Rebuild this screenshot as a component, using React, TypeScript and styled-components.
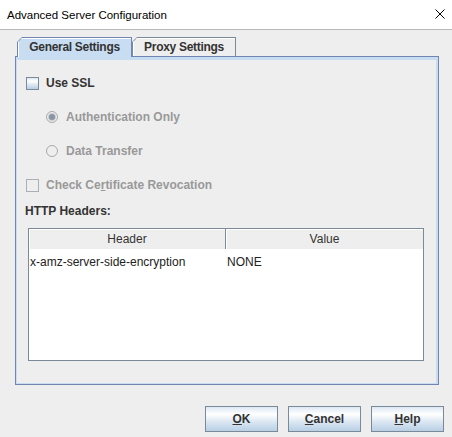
import styled, { createGlobalStyle } from "styled-components";

// Ocean-ish Swing palette
const colors = {
  bg: "#eeeeee",
  text: "#333333",
  disabled: "#999999",
  edge: "#7a8a99",
  edgeBlue: "#6f86b2",
  content: "#c8ddf2",
  white: "#ffffff",
};

const oceanGradient = `linear-gradient(180deg, #dde8f3 0%, #ffffff 30%, #dde8f3 60%, #b8cfe5 100%)`;

const GlobalStyle = createGlobalStyle`
  html, body {
    margin: 0;
    padding: 0;
    background: ${colors.bg};
  }
  body {
    font-family: "Liberation Sans", Arial, sans-serif;
  }
`;

export default function App() {
  return (
    <>
      <GlobalStyle />
      <Window>
        <TitleBar>
          <Title>Advanced Server Configuration</Title>
          <CloseBtn aria-label="Close">
            <svg width="10" height="10" viewBox="0 0 10 10">
              <path d="M0.5 0.5 L9.5 9.5 M9.5 0.5 L0.5 9.5" stroke="#000" strokeWidth="1" />
            </svg>
          </CloseBtn>
        </TitleBar>

        <Content>
          <TabStrip>
            <Tab selected width={115}>
              <TabFace selected>General Settings</TabFace>
            </Tab>
            <Tab width={104}>
              <TabFace>Proxy Settings</TabFace>
            </Tab>
          </TabStrip>

          <Panel>
            <OptionRow>
              <CheckBox />
              <OptionLabel>Use SSL</OptionLabel>
            </OptionRow>
            <OptionRow indent={20} gap={8}>
              <Radio checked disabled />
              <OptionLabel disabled>Authentication Only</OptionLabel>
            </OptionRow>
            <OptionRow indent={20} gap={8}>
              <Radio disabled />
              <OptionLabel disabled>Data Transfer</OptionLabel>
            </OptionRow>
            <OptionRow>
              <CheckBox disabled />
              <OptionLabel disabled>
                Check Ce<u>r</u>tificate Revocation
              </OptionLabel>
            </OptionRow>

            <SectionLabel>HTTP Headers:</SectionLabel>

            <Table>
              <HeaderRow>
                <HeaderCell>Header</HeaderCell>
                <HeaderCell last>Value</HeaderCell>
              </HeaderRow>
              <TableBody>
                <BodyRow>
                  <BodyCell>x-amz-server-side-encryption</BodyCell>
                  <BodyCell>NONE</BodyCell>
                </BodyRow>
              </TableBody>
            </Table>
          </Panel>
        </Content>

        <ButtonRow>
          <DialogButton>
            <u>O</u>K
          </DialogButton>
          <DialogButton>
            <u>C</u>ancel
          </DialogButton>
          <DialogButton>
            <u>H</u>elp
          </DialogButton>
        </ButtonRow>
      </Window>
    </>
  );
}

/* ============ styled-components ============ */

const Window = styled.div`
  width: 452px;
  height: 437px;
  display: flex;
  flex-direction: column;
  background: ${colors.bg};
  overflow: hidden;
`;

const TitleBar = styled.div`
  height: 29px;
  flex-shrink: 0;
  display: flex;
  align-items: center;
  justify-content: space-between;
  padding: 0 7px;
  background: ${colors.white};
  border-bottom: 1px solid #b9b9b9;
`;

const Title = styled.div`
  font-size: 11.5px;
  color: #000;
`;

const CloseBtn = styled.div`
  width: 10px;
  height: 10px;
  display: flex;
  margin-top: -1px;
`;

const Content = styled.div`
  display: flex;
  flex-direction: column;
  padding: 7px 13px 0 15px;
`;

const TabStrip = styled.div`
  display: flex;
  align-items: flex-start;
  height: 20px;
  padding-left: 2px;
  position: relative;
  z-index: 1;
`;

const Tab = styled.div<{ selected?: boolean; width: number }>`
  width: ${({ width }) => width}px;
  height: ${({ selected }) => (selected ? 20 : 19)}px;
  box-sizing: border-box;
  padding: 1px 1px 0 1px;
  background: ${({ selected }) => (selected ? colors.edgeBlue : colors.edge)};
  clip-path: polygon(5px 0, 100% 0, 100% 100%, 0 100%, 0 5px);
`;

const TabFace = styled.div<{ selected?: boolean }>`
  height: 100%;
  display: flex;
  align-items: center;
  justify-content: center;
  padding-bottom: ${({ selected }) => (selected ? 1 : 0)}px;
  box-sizing: border-box;
  background: ${({ selected }) => (selected ? colors.content : colors.bg)};
  box-shadow: inset 1px 1px 0 ${colors.white};
  clip-path: polygon(4px 0, 100% 0, 100% 100%, 0 100%, 0 4px);
  font-size: 12px;
  font-weight: bold;
  letter-spacing: -0.3px;
  color: ${colors.text};
`;

const Panel = styled.div`
  margin-top: -1px;
  height: 329px;
  box-sizing: border-box;
  display: flex;
  flex-direction: column;
  padding: 9px 14px 0 10px;
  border: 1px solid ${colors.edgeBlue};
  box-shadow:
    inset 0 3px 0 ${colors.content},
    inset 1px 0 0 ${colors.content},
    inset -2px 0 0 ${colors.content},
    inset 0 -1px 0 ${colors.content};
`;

const OptionRow = styled.div<{ indent?: number; gap?: number }>`
  height: 34px;
  display: flex;
  align-items: center;
  gap: ${({ gap }) => gap ?? 7}px;
  padding-left: ${({ indent }) => indent ?? 0}px;
`;

const CheckBox = styled.span<{ disabled?: boolean }>`
  width: 13px;
  height: 13px;
  box-sizing: border-box;
  flex-shrink: 0;
  border: 1px solid ${({ disabled }) => (disabled ? "#a8b0b8" : colors.edge)};
  background: ${({ disabled }) => (disabled ? colors.bg : oceanGradient)};
`;

const Radio = styled.span<{ checked?: boolean; disabled?: boolean }>`
  width: 12px;
  height: 12px;
  box-sizing: border-box;
  flex-shrink: 0;
  border-radius: 50%;
  border: 1px solid ${({ disabled }) => (disabled ? "#a9a9a9" : colors.edge)};
  background: ${colors.bg};
  display: flex;
  align-items: center;
  justify-content: center;

  &::after {
    content: "";
    display: ${({ checked }) => (checked ? "block" : "none")};
    width: 6px;
    height: 6px;
    border-radius: 50%;
    background: #8a95a3;
    box-shadow: 0 0 0 1px #c9ced4;
  }
`;

const OptionLabel = styled.span<{ disabled?: boolean }>`
  font-size: 12px;
  font-weight: bold;
  color: ${({ disabled }) => (disabled ? colors.disabled : colors.text)};

  u {
    text-decoration-thickness: 1px;
    text-underline-offset: 1px;
  }
`;

const SectionLabel = styled.div`
  height: 18px;
  display: flex;
  align-items: center;
  margin-left: -1px;
  font-size: 12px;
  font-weight: bold;
  color: ${colors.text};
`;

const Table = styled.div`
  margin: 8px 0 0 2px;
  height: 133px;
  box-sizing: border-box;
  display: flex;
  flex-direction: column;
  border: 1px solid ${colors.edge};
  background: ${colors.white};
`;

const HeaderRow = styled.div`
  display: grid;
  grid-template-columns: 1fr 1fr;
  height: 20px;
  background: ${colors.bg};
`;

const HeaderCell = styled.div<{ last?: boolean }>`
  display: flex;
  align-items: center;
  justify-content: center;
  font-size: 12px;
  color: ${colors.text};
  border-right: ${({ last }) => (last ? "none" : `1px solid ${colors.edge}`)};
  box-shadow: inset 1px 1px 0 ${colors.white};
`;

const TableBody = styled.div`
  flex: 1;
  padding-top: 5px;
`;

const BodyRow = styled.div`
  display: grid;
  grid-template-columns: 1fr 1fr;
  height: 16px;
`;

const BodyCell = styled.div`
  padding-left: 1px;
  font-size: 12px;
  line-height: 16px;
  color: #222;
  white-space: nowrap;
`;

const ButtonRow = styled.div`
  display: flex;
  justify-content: flex-end;
  gap: 10px;
  padding: 21px 8px 0 0;
`;

const DialogButton = styled.button`
  width: 73px;
  height: 26px;
  padding: 0;
  box-sizing: border-box;
  border: 1px solid ${colors.edge};
  border-radius: 0;
  background: ${oceanGradient};
  font-family: "Liberation Sans", Arial, sans-serif;
  font-size: 12px;
  font-weight: bold;
  color: ${colors.text};
  cursor: pointer;

  u {
    text-decoration-thickness: 1px;
    text-underline-offset: 1px;
  }
`;
